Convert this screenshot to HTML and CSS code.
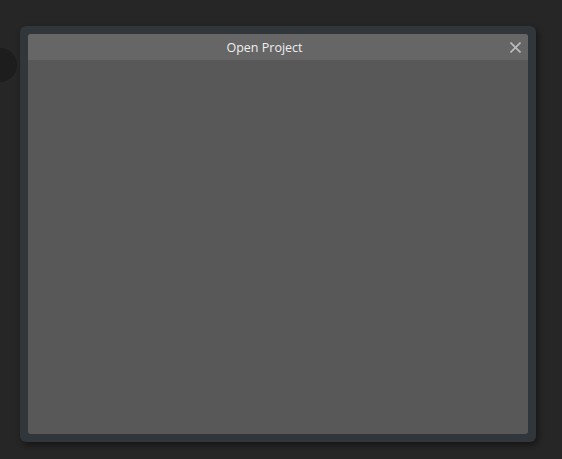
FILE: index.html
```html
<!DOCTYPE html>
<html>
<head>
<meta charset="utf-8">
<link rel="stylesheet" href="styles.css">
</head>
<body>
<div class="blob"></div>
<div class="frame">
  <div class="dialog">
    <div class="header">
      <span class="title">Open Project</span>
      <span class="close">
        <svg width="11" height="11" viewBox="0 0 11 11"><path d="M0.5 0.5L10.5 10.5M10.5 0.5L0.5 10.5" stroke="#bdbdbd" stroke-width="1.6" fill="none"/></svg>
      </span>
    </div>
    <div class="content"></div>
  </div>
</div>
</body>
</html>
```

FILE: styles.css
```css
html, body {
  margin: 0;
  padding: 0;
  width: 562px;
  height: 459px;
  background: #262626;
  overflow: hidden;
  font-family: "Open Sans", "Noto Sans", sans-serif;
}
body {
  position: relative;
  padding-top: 26px;
  padding-left: 20px;
  box-sizing: border-box;
}
.blob {
  position: absolute;
  left: -17px;
  top: 48px;
  width: 34px;
  height: 34px;
  border-radius: 50%;
  background: #1d1d1d;
}
.frame {
  position: relative;
  width: 516px;
  height: 416px;
  box-sizing: border-box;
  padding: 8px;
  background: #31363a;
  border-radius: 6px;
  box-shadow: 2px 3px 6px rgba(0,0,0,0.45);
}
.dialog {
  display: flex;
  flex-direction: column;
  height: 100%;
  border-radius: 3px;
  overflow: hidden;
  background: #585858;
}
.header {
  height: 26px;
  flex: none;
  background: #666666;
  display: flex;
  align-items: center;
  justify-content: center;
  position: relative;
  padding-right: 27px;
}
.title {
  color: #eeeeee;
  font-size: 12.5px;
}
.close {
  position: absolute;
  right: 7px;
  top: 8px;
  width: 11px;
  height: 11px;
  display: flex;
}
.content {
  flex: 1;
}
```
